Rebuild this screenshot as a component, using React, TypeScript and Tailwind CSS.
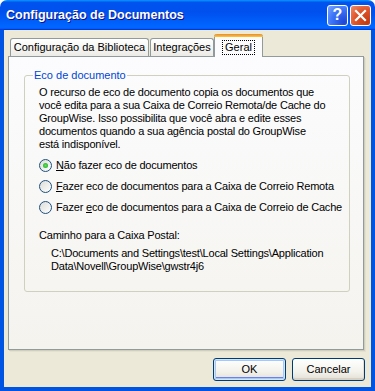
const font = { fontFamily: '"Liberation Sans", Arial, sans-serif' };

function Radio({ checked, children }: { checked?: boolean; children: React.ReactNode }) {
  return (
    <div className="flex items-center h-[21px] whitespace-nowrap">
      <div className="shrink-0 w-[13px] h-[13px] rounded-full border border-[#1C5180] bg-[linear-gradient(135deg,#DCDCD7,#FFFFFF)] flex items-center justify-center">
        {checked && <div className="w-[5px] h-[5px] rounded-full bg-[radial-gradient(circle,#5BE55A,#21A121)]" />}
      </div>
      <span className="ml-[4px] text-black">{children}</span>
    </div>
  );
}

function XpButton({ label, isDefault }: { label: string; isDefault?: boolean }) {
  return (
    <div
      className={`w-[73px] h-[23px] rounded-[3px] border border-[#003C74] bg-[linear-gradient(to_bottom,#FFFFFF,#F3F2EC_60%,#E2DFD4)] flex items-center justify-center text-black ${
        isDefault
          ? 'shadow-[inset_0_0_0_1px_#CEE7FF,inset_0_0_0_2px_#A9C7F5,inset_0_-2px_0_1px_#6982EE]'
          : 'shadow-[inset_0_-2px_0_0_#D6D0C5,inset_-1px_0_0_0_#E3DFD6]'
      }`}
    >
      {label}
    </div>
  );
}

export default function App() {
  return (
    <div className="w-[375px] h-[391px] flex flex-col text-[11px] leading-[13px]" style={font}>
      {/* title bar */}
      <div className="h-[30px] shrink-0 rounded-t-[7px] bg-[linear-gradient(180deg,#0997ff,#0053ee_8%,#0050ee_40%,#0066ff_88%,#0066ff_93%,#005bff_95%,#003dd7_96%,#003dd7)] flex items-center pl-[6px] pr-[4px]">
        <span className="text-white font-bold text-[12.5px] [text-shadow:1px_1px_0_#0F1089] flex-1">
          Configuração de Documentos
        </span>
        <div className="w-[21px] h-[21px] rounded-[3px] border border-white bg-[radial-gradient(circle_at_85%_85%,#1E46D8,#3C74F8_55%,#7EA5FB)] flex items-center justify-center text-white font-bold text-[16px] leading-none">
          ?
        </div>
        <div className="ml-[2px] w-[21px] h-[21px] rounded-[3px] border border-white bg-[radial-gradient(circle_at_85%_85%,#C23B10,#E0542A_55%,#EE8E6C)] flex items-center justify-center">
          <svg width="13" height="13" viewBox="0 0 13 13">
            <path d="M2 2 L11 11 M11 2 L2 11" stroke="white" strokeWidth="2.2" strokeLinecap="square" />
          </svg>
        </div>
      </div>

      {/* body */}
      <div className="flex-1 flex flex-col bg-[#ECE9D8] border-x-4 border-b-4 border-[#0054E3] pt-[4px] px-[4px]">
        {/* tabs */}
        <div className="flex items-end h-[22px] pl-[2px] relative z-10">
          <div className="w-[139px] h-[18px] border border-b-0 border-[#919B9C] rounded-t-[3px] bg-[linear-gradient(to_bottom,#FFFFFF,#ECEBE6)] flex items-center justify-center text-black">
            Configuração da Biblioteca
          </div>
          <div className="ml-[1px] w-[64px] h-[18px] border border-b-0 border-[#919B9C] rounded-t-[3px] bg-[linear-gradient(to_bottom,#FFFFFF,#ECEBE6)] flex items-center justify-center text-black">
            Integrações
          </div>
          <div className="w-[49px] h-[23px] -mb-[1px] border-x border-[#919B9C] rounded-t-[3px] bg-[#FCFCFE] flex flex-col">
            <div className="h-[3px] rounded-t-[3px] bg-[linear-gradient(to_bottom,#E68B2C,#FFC73C)] -mx-[1px]" />
            <div className="flex-1 flex items-center justify-center">
              <span className="px-[2px] border border-dotted border-black text-black leading-[13px]">Geral</span>
            </div>
          </div>
        </div>

        {/* panel */}
        <div className="w-[356px] h-[294px] border border-[#919B9C] bg-[linear-gradient(to_bottom,#FCFCFE,#F4F3EE)] shadow-[1px_1px_0_#D0CEBF,2px_2px_0_#E3E0D0]">
          <fieldset className="ml-[15px] mt-[12px] w-[326px] h-[223px] border border-[#D0D0BF] rounded-[3px] pl-[14px] tracking-[-0.2px]">
            <legend className="-ml-[6px] px-[1px] text-[#0046D5] tracking-normal">Eco de documento</legend>
            <p className="pt-[4px] text-black whitespace-nowrap">
              O recurso de eco de documento copia os documentos que
              <br />
              você edita para a sua Caixa de Correio Remota/de Cache do
              <br />
              GroupWise. Isso possibilita que você abra e edite esses
              <br />
              documentos quando a sua agência postal do GroupWise
              <br />
              está indisponível.
            </p>
            <div className="mt-[4px] flex flex-col">
              <Radio checked>
                <span className="underline">N</span>ão fazer eco de documentos
              </Radio>
              <Radio>
                <span className="underline">F</span>azer eco de documentos para a Caixa de Correio Remota
              </Radio>
              <Radio>
                Fazer <span className="underline">e</span>co de documentos para a Caixa de Correio de Cache
              </Radio>
            </div>
            <div className="mt-[11px] text-black">Caminho para a Caixa Postal:</div>
            <div className="mt-[5px] pl-[12px] text-black whitespace-nowrap">
              C:\Documents and Settings\test\Local Settings\Application
              <br />
              Data\Novell\GroupWise\gwstr4j6
            </div>
          </fieldset>
        </div>

        {/* buttons */}
        <div className="flex justify-end gap-[6px] mt-[8px] pr-[2px]">
          <XpButton label="OK" isDefault />
          <XpButton label="Cancelar" />
        </div>
      </div>
    </div>
  );
}
